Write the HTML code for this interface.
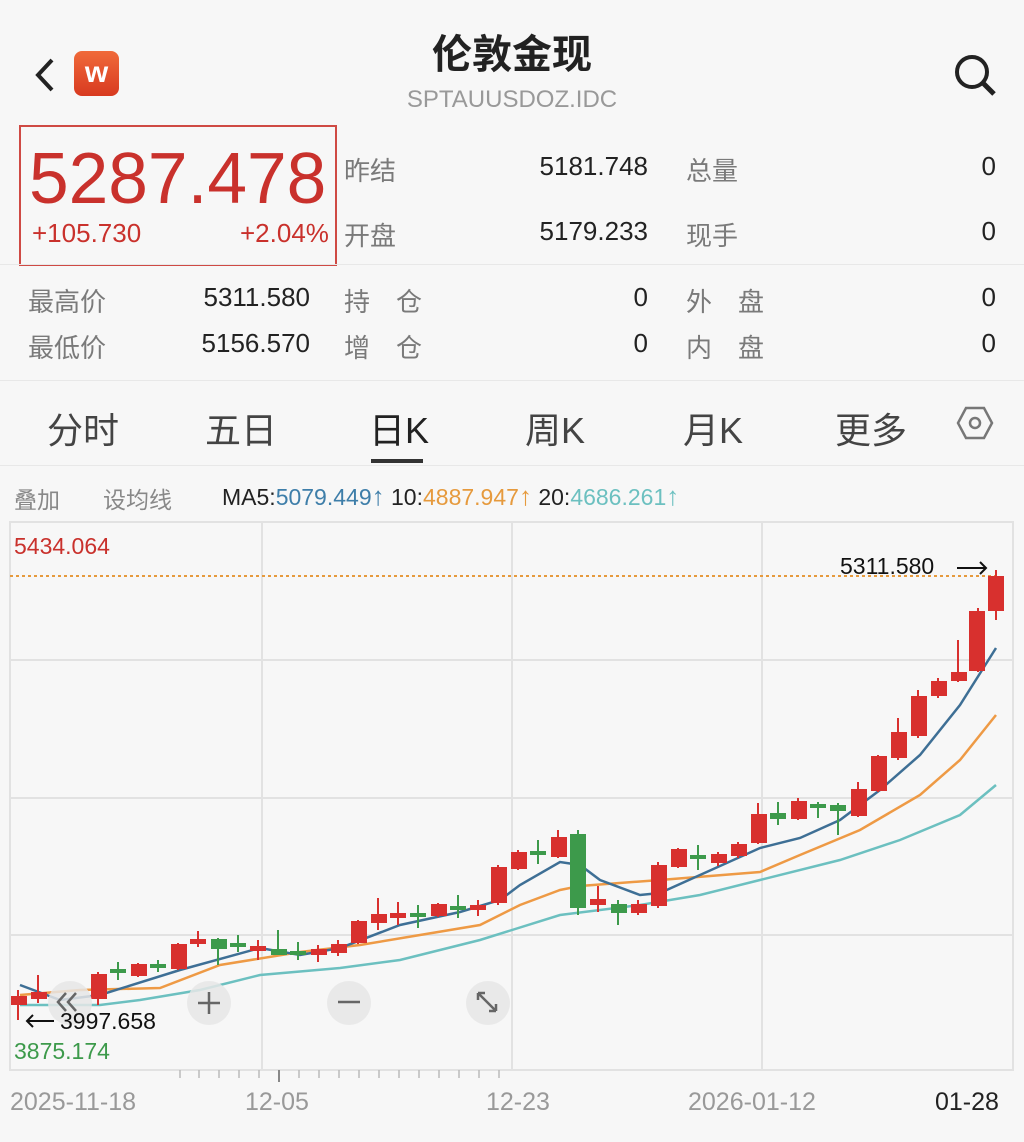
<!DOCTYPE html>
<html><head><meta charset="utf-8"><style>
body{margin:0;width:1024px;height:1142px;background:#f7f7f7;font-family:"Liberation Sans","Noto Sans CJK SC",sans-serif;position:relative;overflow:hidden}
.a{position:absolute;white-space:nowrap}
.g{color:#888}
.k{color:#222}
.lab{font-size:26px;color:#7a7a7a}
.val{font-size:26px;color:#222;text-align:right}
</style></head><body>
<svg class="a" style="left:30px;top:55px" width="30" height="40"><path d="M22 5 L8 20 L22 35" stroke="#222" stroke-width="4" fill="none"/></svg>
<div class="a" style="left:74px;top:51px;width:45px;height:45px;border-radius:8px;background:linear-gradient(#f06a3a,#d83a20);color:#fff;font-weight:bold;font-size:30px;text-align:center;line-height:44px">w</div>
<div class="a k" style="left:0;width:1024px;text-align:center;top:22px;font-size:40px;font-weight:bold">伦敦金现</div>
<div class="a g" style="left:0;width:1024px;text-align:center;top:86px;font-size:24px;color:#999">SPTAUUSDOZ.IDC</div>
<svg class="a" style="left:950px;top:50px" width="50" height="50"><circle cx="22" cy="22" r="15" stroke="#222" stroke-width="4" fill="none"/><path d="M33 33 L44 44" stroke="#222" stroke-width="5"/></svg>

<div class="a" style="left:19px;top:125px;width:314px;height:137px;border:2px solid #cf4a44"></div>
<div class="a" style="left:29px;top:138px;font-size:72px;color:#c9312c;transform:scaleX(0.99);transform-origin:left">5287.478</div>
<div class="a" style="left:32px;top:218px;font-size:26px;color:#c9312c">+105.730</div>
<div class="a" style="left:240px;top:218px;font-size:26px;color:#c9312c">+2.04%</div>

<div class="a lab" style="left:344px;top:151px">昨结</div><div class="a val" style="left:500px;width:148px;top:151px">5181.748</div>
<div class="a lab" style="left:686px;top:151px">总量</div><div class="a val" style="left:900px;width:96px;top:151px">0</div>
<div class="a lab" style="left:344px;top:216px">开盘</div><div class="a val" style="left:500px;width:148px;top:216px">5179.233</div>
<div class="a lab" style="left:686px;top:216px">现手</div><div class="a val" style="left:900px;width:96px;top:216px">0</div>
<div class="a" style="left:0;top:264px;width:1024px;height:1px;background:#e8e8e8"></div>
<div class="a lab" style="left:28px;top:282px">最高价</div><div class="a val" style="left:160px;width:150px;top:282px">5311.580</div>
<div class="a lab" style="left:344px;top:282px">持　仓</div><div class="a val" style="left:500px;width:148px;top:282px">0</div>
<div class="a lab" style="left:686px;top:282px">外　盘</div><div class="a val" style="left:900px;width:96px;top:282px">0</div>
<div class="a lab" style="left:28px;top:328px">最低价</div><div class="a val" style="left:160px;width:150px;top:328px">5156.570</div>
<div class="a lab" style="left:344px;top:328px">增　仓</div><div class="a val" style="left:500px;width:148px;top:328px">0</div>
<div class="a lab" style="left:686px;top:328px">内　盘</div><div class="a val" style="left:900px;width:96px;top:328px">0</div>
<div class="a" style="left:0;top:380px;width:1024px;height:1px;background:#e8e8e8"></div>

<div class="a" style="left:47px;top:402px;font-size:36px;color:#444">分时</div>
<div class="a" style="left:205px;top:402px;font-size:36px;color:#444">五日</div>
<div class="a" style="left:369px;top:402px;font-size:36px;color:#222">日K</div>
<div class="a" style="left:371px;top:459px;width:52px;height:4px;background:#333"></div>
<div class="a" style="left:525px;top:402px;font-size:36px;color:#444">周K</div>
<div class="a" style="left:683px;top:402px;font-size:36px;color:#444">月K</div>
<div class="a" style="left:835px;top:402px;font-size:36px;color:#444">更多</div>
<svg class="a" style="left:956px;top:404px" width="38" height="38"><path d="M10 4 L28 4 L36 19 L28 34 L10 34 L2 19 Z" stroke="#777" stroke-width="2.5" fill="none"/><circle cx="19" cy="19" r="5" stroke="#777" stroke-width="2.5" fill="none"/></svg>
<div class="a" style="left:0;top:465px;width:1024px;height:1px;background:#e8e8e8"></div>

<div class="a" style="left:14px;top:481px;font-size:23px;color:#888">叠加</div>
<div class="a" style="left:103px;top:481px;font-size:23px;color:#888">设均线</div>
<div class="a" style="left:222px;top:481px;font-size:23px;color:#222">MA5:<span style="color:#3e7ea9">5079.449<span style="font-size:26px">↑</span></span> 10:<span style="color:#e69a3d">4887.947<span style="font-size:26px">↑</span></span> 20:<span style="color:#6cc0c0">4686.261<span style="font-size:26px">↑</span></span></div>

<svg class="a" style="left:0;top:0" width="1024" height="1142">
<g stroke="#e2e2e2" stroke-width="2" fill="none">
<rect x="10" y="522" width="1003" height="548"/>
<line x1="10" y1="660" x2="1013" y2="660"/><line x1="10" y1="798" x2="1013" y2="798"/><line x1="10" y1="935" x2="1013" y2="935"/>
<line x1="262" y1="522" x2="262" y2="1070"/><line x1="512" y1="522" x2="512" y2="1070"/><line x1="762" y1="522" x2="762" y2="1070"/>
</g>
<line x1="10" y1="576" x2="1000" y2="576" stroke="#e69a3d" stroke-width="2" stroke-dasharray="3,3"/>
<g fill="none" stroke-width="2.5">
<polyline stroke="#6cc0c0" points="20,1005 100,1005 140,1000 200,990 260,975 340,968 400,960 480,940 560,915 640,905 700,895 760,880 840,860 900,840 960,815 996,785"/>
<polyline stroke="#ee9a45" points="20,995 80,990 160,988 220,965 300,952 360,945 420,935 480,925 520,905 560,890 580,886 660,880 760,872 800,855 860,830 920,795 960,760 996,715"/>
<polyline stroke="#3e6f95" points="20,985 60,1000 100,995 180,970 260,948 300,955 340,948 400,925 460,912 500,900 520,885 560,862 580,865 600,880 640,895 660,893 700,875 760,848 800,838 840,820 880,790 920,755 960,705 996,648"/>
</g>
<g stroke-width="2">
<g stroke="#d8302e" fill="#d8302e">
<line x1="18" y1="990" x2="18" y2="1020"/><rect x="12" y="997" width="14" height="7"/>
<line x1="38" y1="975" x2="38" y2="1003"/><rect x="32" y="993" width="14" height="5"/>
<line x1="98" y1="972" x2="98" y2="1005"/><rect x="92" y="975" width="14" height="23"/>
<line x1="138" y1="963" x2="138" y2="977"/><rect x="132" y="965" width="14" height="10"/>
<line x1="178" y1="943" x2="178" y2="970"/><rect x="172" y="945" width="14" height="23"/>
<line x1="198" y1="931" x2="198" y2="947"/><rect x="191" y="940" width="14" height="3"/>
<line x1="258" y1="940" x2="258" y2="960"/><rect x="251" y="947" width="14" height="3"/>
<line x1="318" y1="945" x2="318" y2="962"/><rect x="312" y="950" width="14" height="4"/>
<line x1="338" y1="940" x2="338" y2="956"/><rect x="332" y="945" width="14" height="7"/>
<line x1="358" y1="920" x2="358" y2="944"/><rect x="352" y="922" width="14" height="20"/>
<line x1="378" y1="898" x2="378" y2="930"/><rect x="372" y="915" width="14" height="7"/>
<line x1="398" y1="902" x2="398" y2="925"/><rect x="391" y="914" width="14" height="3"/>
<line x1="438" y1="903" x2="438" y2="917"/><rect x="432" y="905" width="14" height="10"/>
<line x1="478" y1="900" x2="478" y2="916"/><rect x="471" y="906" width="14" height="3"/>
<line x1="498" y1="865" x2="498" y2="905"/><rect x="492" y="868" width="14" height="34"/>
<line x1="518" y1="850" x2="518" y2="870"/><rect x="512" y="853" width="14" height="15"/>
<line x1="558" y1="830" x2="558" y2="858"/><rect x="552" y="838" width="14" height="18"/>
<line x1="598" y1="886" x2="598" y2="912"/><rect x="591" y="900" width="14" height="4"/>
<line x1="638" y1="900" x2="638" y2="915"/><rect x="632" y="905" width="14" height="7"/>
<line x1="658" y1="862" x2="658" y2="908"/><rect x="652" y="866" width="14" height="39"/>
<line x1="678" y1="848" x2="678" y2="868"/><rect x="672" y="850" width="14" height="16"/>
<line x1="718" y1="852" x2="718" y2="866"/><rect x="712" y="855" width="14" height="7"/>
<line x1="738" y1="842" x2="738" y2="858"/><rect x="732" y="845" width="14" height="10"/>
<line x1="758" y1="803" x2="758" y2="844"/><rect x="752" y="815" width="14" height="27"/>
<line x1="798" y1="798" x2="798" y2="820"/><rect x="792" y="802" width="14" height="16"/>
<line x1="858" y1="782" x2="858" y2="817"/><rect x="852" y="790" width="14" height="25"/>
<line x1="878" y1="755" x2="878" y2="792"/><rect x="872" y="757" width="14" height="33"/>
<line x1="898" y1="718" x2="898" y2="760"/><rect x="892" y="733" width="14" height="24"/>
<line x1="918" y1="690" x2="918" y2="738"/><rect x="912" y="697" width="14" height="38"/>
<line x1="938" y1="678" x2="938" y2="698"/><rect x="932" y="682" width="14" height="13"/>
<line x1="958" y1="640" x2="958" y2="682"/><rect x="952" y="673" width="14" height="7"/>
<line x1="978" y1="608" x2="978" y2="672"/><rect x="970" y="612" width="14" height="58"/>
<line x1="996" y1="570" x2="996" y2="620"/><rect x="989" y="577" width="14" height="33"/>
</g>
<g stroke="#3d9a4b" fill="#3d9a4b">
<line x1="118" y1="962" x2="118" y2="980"/><rect x="111" y="970" width="14" height="2"/>
<line x1="158" y1="960" x2="158" y2="972"/><rect x="151" y="965" width="14" height="2"/>
<line x1="218" y1="938" x2="218" y2="965"/><rect x="212" y="940" width="14" height="8"/>
<line x1="238" y1="935" x2="238" y2="952"/><rect x="231" y="944" width="14" height="2"/>
<line x1="278" y1="930" x2="278" y2="955"/><rect x="272" y="950" width="14" height="4"/>
<line x1="298" y1="942" x2="298" y2="960"/><rect x="291" y="952" width="14" height="2"/>
<line x1="418" y1="905" x2="418" y2="928"/><rect x="411" y="914" width="14" height="2"/>
<line x1="458" y1="895" x2="458" y2="918"/><rect x="451" y="907" width="14" height="2"/>
<line x1="538" y1="840" x2="538" y2="864"/><rect x="531" y="852" width="14" height="2"/>
<line x1="578" y1="830" x2="578" y2="915"/><rect x="571" y="835" width="14" height="72"/>
<line x1="618" y1="900" x2="618" y2="925"/><rect x="612" y="905" width="14" height="7"/>
<line x1="698" y1="845" x2="698" y2="870"/><rect x="691" y="856" width="14" height="2"/>
<line x1="778" y1="802" x2="778" y2="825"/><rect x="771" y="814" width="14" height="4"/>
<line x1="818" y1="802" x2="818" y2="818"/><rect x="811" y="805" width="14" height="2"/>
<line x1="838" y1="803" x2="838" y2="835"/><rect x="831" y="806" width="14" height="4"/>
</g>
</g>
<g fill="rgba(230,230,230,0.85)"><circle cx="70" cy="1003" r="22"/><circle cx="209" cy="1003" r="22"/><circle cx="349" cy="1003" r="22"/><circle cx="488" cy="1003" r="22"/></g>
<g stroke="#666" stroke-width="2.5" fill="none">
<path d="M66 993 L58 1002 L66 1011 M76 993 L68 1002 L76 1011"/>
<path d="M198 1003 H220 M209 992 V1014"/>
<path d="M338 1002 H360"/>
<path d="M478 993 L496 1011 M478 993 H485 M478 993 V1000 M496 1011 H489 M496 1011 V1004"/>
</g>
<g stroke="#111" stroke-width="2" fill="none">
<path d="M27 1021 H54 M33 1015 L27 1021 L33 1027"/>
<path d="M957 568 H986 M980 562 L986 568 L980 574"/>
</g>
<g stroke="#bbb" stroke-width="1.5">
<line x1="180" y1="1070" x2="180" y2="1078"/><line x1="199" y1="1070" x2="199" y2="1078"/><line x1="219" y1="1070" x2="219" y2="1078"/><line x1="239" y1="1070" x2="239" y2="1078"/><line x1="259" y1="1070" x2="259" y2="1078"/><line x1="299" y1="1070" x2="299" y2="1078"/><line x1="319" y1="1070" x2="319" y2="1078"/><line x1="339" y1="1070" x2="339" y2="1078"/><line x1="359" y1="1070" x2="359" y2="1078"/><line x1="379" y1="1070" x2="379" y2="1078"/><line x1="399" y1="1070" x2="399" y2="1078"/><line x1="419" y1="1070" x2="419" y2="1078"/><line x1="439" y1="1070" x2="439" y2="1078"/><line x1="459" y1="1070" x2="459" y2="1078"/><line x1="479" y1="1070" x2="479" y2="1078"/><line x1="499" y1="1070" x2="499" y2="1078"/>
</g>
<line x1="279" y1="1070" x2="279" y2="1082" stroke="#888" stroke-width="2"/>
</svg>
<div class="a" style="left:14px;top:533px;font-size:23px;color:#c9312c">5434.064</div>
<div class="a" style="left:840px;top:553px;font-size:23px;color:#111">5311.580</div>
<div class="a" style="left:60px;top:1008px;font-size:23px;color:#111">3997.658</div>
<div class="a" style="left:14px;top:1038px;font-size:23px;color:#3d9a4b">3875.174</div>
<div class="a" style="left:10px;top:1088px;font-size:25px;color:#999">2025-11-18</div>
<div class="a" style="left:245px;top:1088px;font-size:25px;color:#999">12-05</div>
<div class="a" style="left:486px;top:1088px;font-size:25px;color:#999">12-23</div>
<div class="a" style="left:688px;top:1088px;font-size:25px;color:#999">2026-01-12</div>
<div class="a" style="left:935px;top:1088px;font-size:25px;color:#222">01-28</div>
</body></html>
